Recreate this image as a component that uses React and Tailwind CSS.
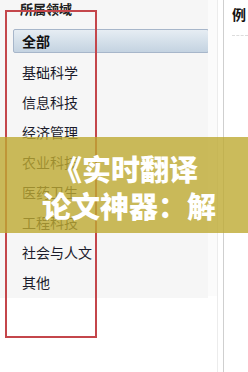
import React from "react";

const fields = ["基础科学", "信息科技", "经济管理", "农业科技", "医药卫生", "工程科技", "社会与人文", "其他"];

export default function App() {
  return (
    <div className="relative w-[248px] h-[372px] overflow-hidden bg-white font-['Noto_Sans_CJK_SC',sans-serif]">
      <div className="flex h-full">
        {/* left filter panel */}
        <div className="w-[208px] h-[298px] shrink-0 bg-[#f6f6f6]">
          <div className="h-[29px] pl-[20px] text-[13px] font-bold leading-[18px] text-[#222]">所属领域</div>
          <div className="ml-[13px] w-[196px] h-[24px] pl-[8px] border border-[#a7b6ca] rounded-[2px] bg-gradient-to-b from-[#e6edf3] to-[#c4d3e1] text-[14px] font-bold leading-[22px] text-[#111]">
            全部
          </div>
          <ul className="mt-[4px]">
            {fields.map((name) => (
              <li key={name} className="h-[30px] pl-[22px] text-[14px] leading-[30px] text-[#1b1b2b]">
                {name}
              </li>
            ))}
          </ul>
        </div>
        <div className="w-[9px] h-[296px] shrink-0 bg-[#fbfbfb]" />
        <div className="w-px shrink-0 bg-[#ececec]" />
        <div className="w-[5px] shrink-0" />
        <div className="w-px shrink-0 bg-[#cfcfcf]" />
        {/* right column */}
        <div className="flex-1 pl-[8px]">
          <div className="h-[27px] pt-[5px] text-[14px] font-bold leading-[18px] text-[#111]">例</div>
          <div className="mt-[8px] border-b border-dashed border-[#dcdcdc]" />
        </div>
      </div>

      {/* red annotation box */}
      <div className="absolute left-[5px] top-[10px] w-[92px] h-[328px] border-2 border-[#c4464b]" />

      {/* title banner */}
      <div className="absolute left-0 top-[137px] w-full h-[96px] bg-[rgba(190,170,50,0.8)] text-white font-black text-[29px] leading-[37px] whitespace-nowrap">
        <div className="pt-[13px] pl-[53px]">《实时翻译</div>
        <div className="pl-[42px]">论文神器：解</div>
      </div>
    </div>
  );
}
